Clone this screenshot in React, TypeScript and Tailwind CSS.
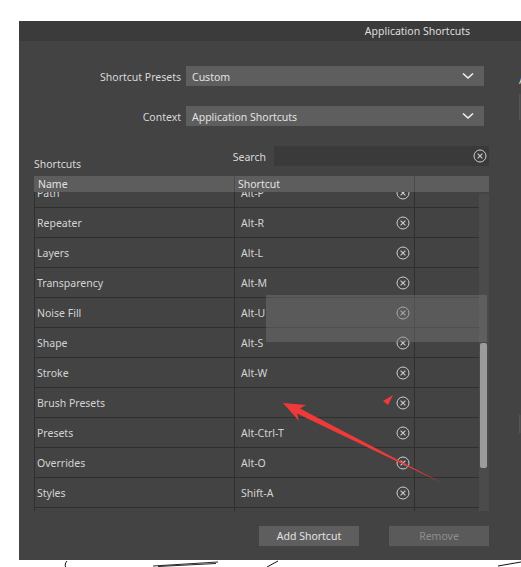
import type { ReactNode } from 'react'

const rows: [string, string][] = [
  ['Path', 'Alt-P'],
  ['Repeater', 'Alt-R'],
  ['Layers', 'Alt-L'],
  ['Transparency', 'Alt-M'],
  ['Noise Fill', 'Alt-U'],
  ['Shape', 'Alt-S'],
  ['Stroke', 'Alt-W'],
  ['Brush Presets', ''],
  ['Presets', 'Alt-Ctrl-T'],
  ['Overrides', 'Alt-O'],
  ['Styles', 'Shift-A'],
  ['Swatches', ''],
]

function ClearIcon({ className = '' }: { className?: string }) {
  return (
    <svg width="14" height="14" viewBox="0 0 14 14" className={className}>
      <circle cx="7" cy="7" r="6" fill="none" stroke="currentColor" strokeWidth="1" />
      <path d="M4.6 4.6 L9.4 9.4 M9.4 4.6 L4.6 9.4" stroke="currentColor" strokeWidth="1.1" />
    </svg>
  )
}

function Chevron() {
  return (
    <svg width="12" height="8" viewBox="0 0 12 8">
      <path d="M1 1.5 L6 6 L11 1.5" fill="none" stroke="#f2f2f2" strokeWidth="1.6" />
    </svg>
  )
}

function Dropdown({ label, value }: { label: string; value: string }) {
  return (
    <div className="flex items-center h-[20px] gap-[5px]">
      <span className="w-[147px] pt-[2px] text-right text-[#d8d8d8]">{label}</span>
      <div className="w-[298px] h-[20px] bg-[#5e5e5e] flex items-center justify-between pl-[6px] pr-[10px]">
        <span className="pt-[2px] text-[#e2e2e2]">{value}</span>
        <Chevron />
      </div>
    </div>
  )
}

function Button({ children, disabled }: { children: ReactNode; disabled?: boolean }) {
  return (
    <div
      className={
        disabled
          ? 'w-[100px] h-[20px] bg-[#5a5a5a] flex items-center justify-center text-[#8e8e8e]'
          : 'w-[100px] h-[20px] bg-[#5e5e5e] flex items-center justify-center text-[#e4e4e4]'
      }
    >
      {children}
    </div>
  )
}

export default function App() {
  return (
    <div className="relative w-[521px] h-[567px] bg-white overflow-hidden font-['Noto_Sans','Open_Sans',sans-serif] text-[10.5px] leading-none">
      <div className="pl-[19px] pt-[21px]">
        <div className="w-[502px] h-[539px] bg-[#434343] flex flex-col overflow-hidden">
          <div className="h-[20px] shrink-0 bg-[#3b3b3b] border-b border-[#393939] flex items-center justify-end pr-[51px] pt-[2px] text-[#dedede]">
            Application Shortcuts
          </div>

          <div className="flex flex-1">
            <div className="ml-[15px] w-[455px] shrink-0 flex flex-col">
              <div className="mt-[25px]">
                <Dropdown label="Shortcut Presets" value="Custom" />
              </div>
              <div className="mt-[20px]">
                <Dropdown label="Context" value="Application Shortcuts" />
              </div>

              <div className="mt-[20px] flex h-[20px]">
                <span className="flex-1 pt-[13px] text-[#d8d8d8]">Shortcuts</span>
                <span className="self-center pt-[2px] mr-[8px] text-[#d8d8d8]">Search</span>
                <div className="w-[215px] h-[20px] bg-[#3a3a3a] flex items-center justify-end pr-[2px] text-[#cfcfcf]">
                  <ClearIcon />
                </div>
              </div>

              <div className="mt-[10px] h-[16px] bg-[#5d5d5d] flex text-[#e2e2e2]">
                <div className="w-[201px] pl-[4px] flex items-center border-r border-[#4a4a4a]">Name</div>
                <div className="w-[180px] pl-[3px] flex items-center border-r border-[#4a4a4a]">Shortcut</div>
                <div className="flex-1" />
              </div>

              <div className="h-[319px] flex">
                <div className="w-[445px] overflow-hidden border-l border-[#303030]">
                  <div className="-mt-[14px]">
                    {rows.map(([name, key]) => (
                      <div key={name} className="h-[30px] flex border-b border-[#2f2f2f] text-[#d4d4d4]">
                        <div className="w-[200px] pl-[2px] pt-[2px] flex items-center border-r border-[#2f2f2f]">{name}</div>
                        <div className="w-[180px] pl-[6px] pr-[4px] flex items-center justify-between border-r border-[#2f2f2f]">
                          <span className="pt-[2px]">{key}</span>
                          <ClearIcon className="text-[#cfcfcf]" />
                        </div>
                        <div className="flex-1" />
                      </div>
                    ))}
                  </div>
                </div>
                <div className="w-[10px] mt-[2px] bg-[#4b4b4b] flex flex-col pl-[1px] pr-[2px]">
                  <div className="h-[149px]" />
                  <div className="h-[125px] bg-[#9c9c9c] rounded-[2px]" />
                </div>
              </div>

              <div className="mt-[15px] flex justify-end gap-[30px]">
                <Button>Add Shortcut</Button>
                <Button disabled>Remove</Button>
              </div>
            </div>

            <div className="ml-[30px] w-[60px] shrink-0 flex flex-col">
              <span className="mt-[34px] text-[#d8d8d8]">Align</span>
              <div className="mt-[8px] h-[26px] bg-[#4c4c4c] border-l border-[#555555]" />
              <div className="mt-[295px] h-[18px] bg-[#4c4c4c] border-l border-[#555555]" />
            </div>
          </div>
        </div>
      </div>

      <svg className="absolute left-0 top-[559px]" width="521" height="8" viewBox="0 559 521 8">
        <path d="M67 561 C65 563 65 565 65.5 567" fill="none" stroke="#111" strokeWidth="1" />
        <path d="M153 566 L218 562 M158 566.5 L216 563.5" fill="none" stroke="#111" strokeWidth="0.9" />
        <path d="M267 567 L278 561" fill="none" stroke="#111" strokeWidth="1" />
        <path d="M498 566 L521 562" fill="none" stroke="#111" strokeWidth="1" />
      </svg>

      <div className="absolute left-[266px] top-[295px] w-[221px] h-[47px] bg-[#777777]/45" />

      <svg className="absolute inset-0 pointer-events-none" width="521" height="567" viewBox="0 0 521 567">
        <polygon points="283,403 306,405 300,408.5 442,483 297,413.5 299,421" fill="#f03a3a" />
        <polygon points="383,401 393,395 388,405" fill="#f03a3a" />
      </svg>
    </div>
  )
}
